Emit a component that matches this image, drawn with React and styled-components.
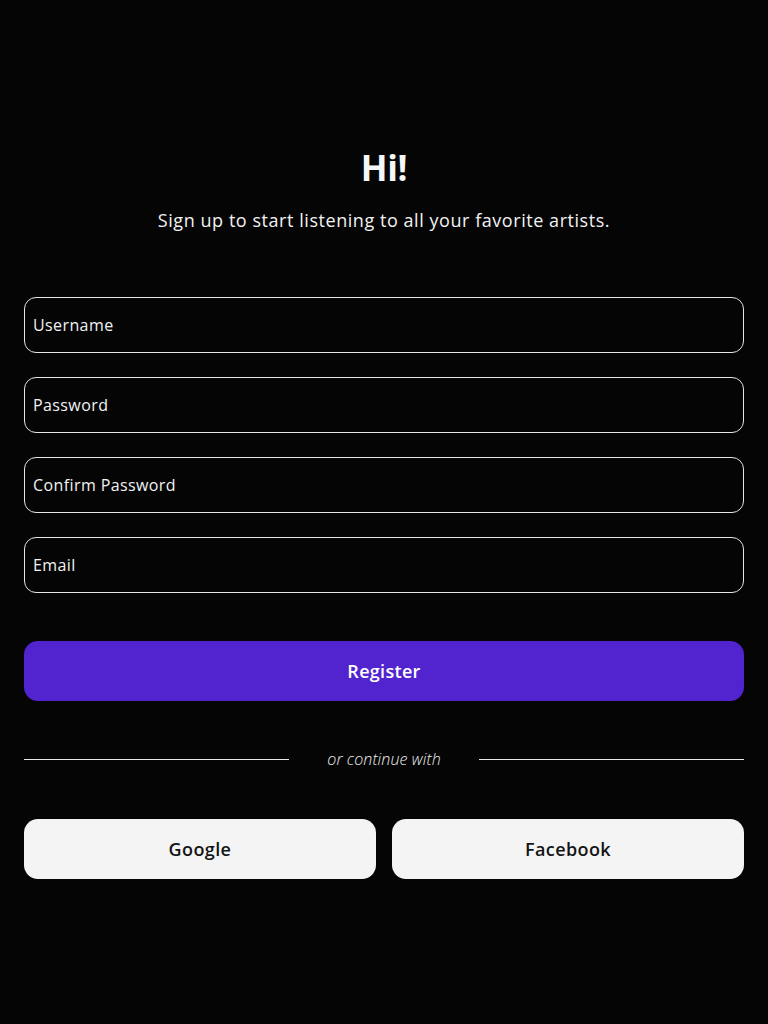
import React from 'react'
import styled, { createGlobalStyle } from 'styled-components'

const GlobalStyle = createGlobalStyle`
  html, body {
    margin: 0;
    padding: 0;
    background: #050505;
  }
  body {
    font-family: "Open Sans", "Noto Sans", sans-serif;
    color: #f5f5f5;
  }
  * { box-sizing: border-box; }
`

const Page = styled.div`
  min-height: 1024px;
  background: #050505;
  padding: 146px 24px 0;
  display: flex;
  flex-direction: column;
`

const Header = styled.header`
  display: flex;
  flex-direction: column;
  align-items: center;
`

const Title = styled.h1`
  margin: 0;
  font-size: 35px;
  font-weight: 700;
  line-height: 44px;
  color: #f7f7f7;
  letter-spacing: -0.3px;
`

const Subtitle = styled.p`
  margin: 17px 0 0;
  font-size: 18px;
  line-height: 26px;
  letter-spacing: 0.55px;
  color: #f2f2f2;
`

const Form = styled.form`
  margin-top: 64px;
  display: flex;
  flex-direction: column;
  gap: 24px;
`

const Field = styled.input`
  height: 56px;
  width: 100%;
  padding: 0 8px;
  border: 1px solid #e6e6e6;
  border-radius: 12px;
  background: transparent;
  font-family: inherit;
  font-size: 16px;
  font-weight: 400;
  letter-spacing: 0.4px;
  color: #fff;
  outline: none;
  &::placeholder {
    color: #f2f2f2;
    opacity: 1;
  }
`

const Register = styled.button`
  margin-top: 48px;
  height: 60px;
  border: none;
  border-radius: 14px;
  background: #5224cf;
  color: #fff;
  font-family: inherit;
  font-size: 18px;
  font-weight: 600;
  letter-spacing: 0.3px;
`

const Divider = styled.div`
  margin-top: 47px;
  display: flex;
  align-items: center;
`

const Line = styled.span`
  flex: 1;
  height: 1px;
  background: #e8e8e8;
`

const DividerText = styled.span`
  padding: 0 38px;
  font-size: 16px;
  font-style: italic;
  font-weight: 300;
  letter-spacing: 0.1px;
  color: #eee;
`

const Socials = styled.div`
  margin-top: 49px;
  display: grid;
  grid-template-columns: 1fr 1fr;
  gap: 16px;
`

const SocialButton = styled.button`
  height: 60px;
  border: none;
  border-radius: 14px;
  background: #f4f4f4;
  color: #141414;
  font-family: inherit;
  font-size: 18px;
  font-weight: 600;
  letter-spacing: 0.4px;
`

export default function App () {
  return <Page>
    <GlobalStyle />
    <Header>
      <Title>Hi!</Title>
      <Subtitle>Sign up to start listening to all your favorite artists.</Subtitle>
    </Header>
    <Form onSubmit={e => e.preventDefault()}>
      <Field type="text" placeholder="Username" />
      <Field type="password" placeholder="Password" />
      <Field type="password" placeholder="Confirm Password" />
      <Field type="email" placeholder="Email" />
    </Form>
    <Register type="button">Register</Register>
    <Divider>
      <Line />
      <DividerText>or continue with</DividerText>
      <Line />
    </Divider>
    <Socials>
      <SocialButton type="button">Google</SocialButton>
      <SocialButton type="button">Facebook</SocialButton>
    </Socials>
  </Page>
}
